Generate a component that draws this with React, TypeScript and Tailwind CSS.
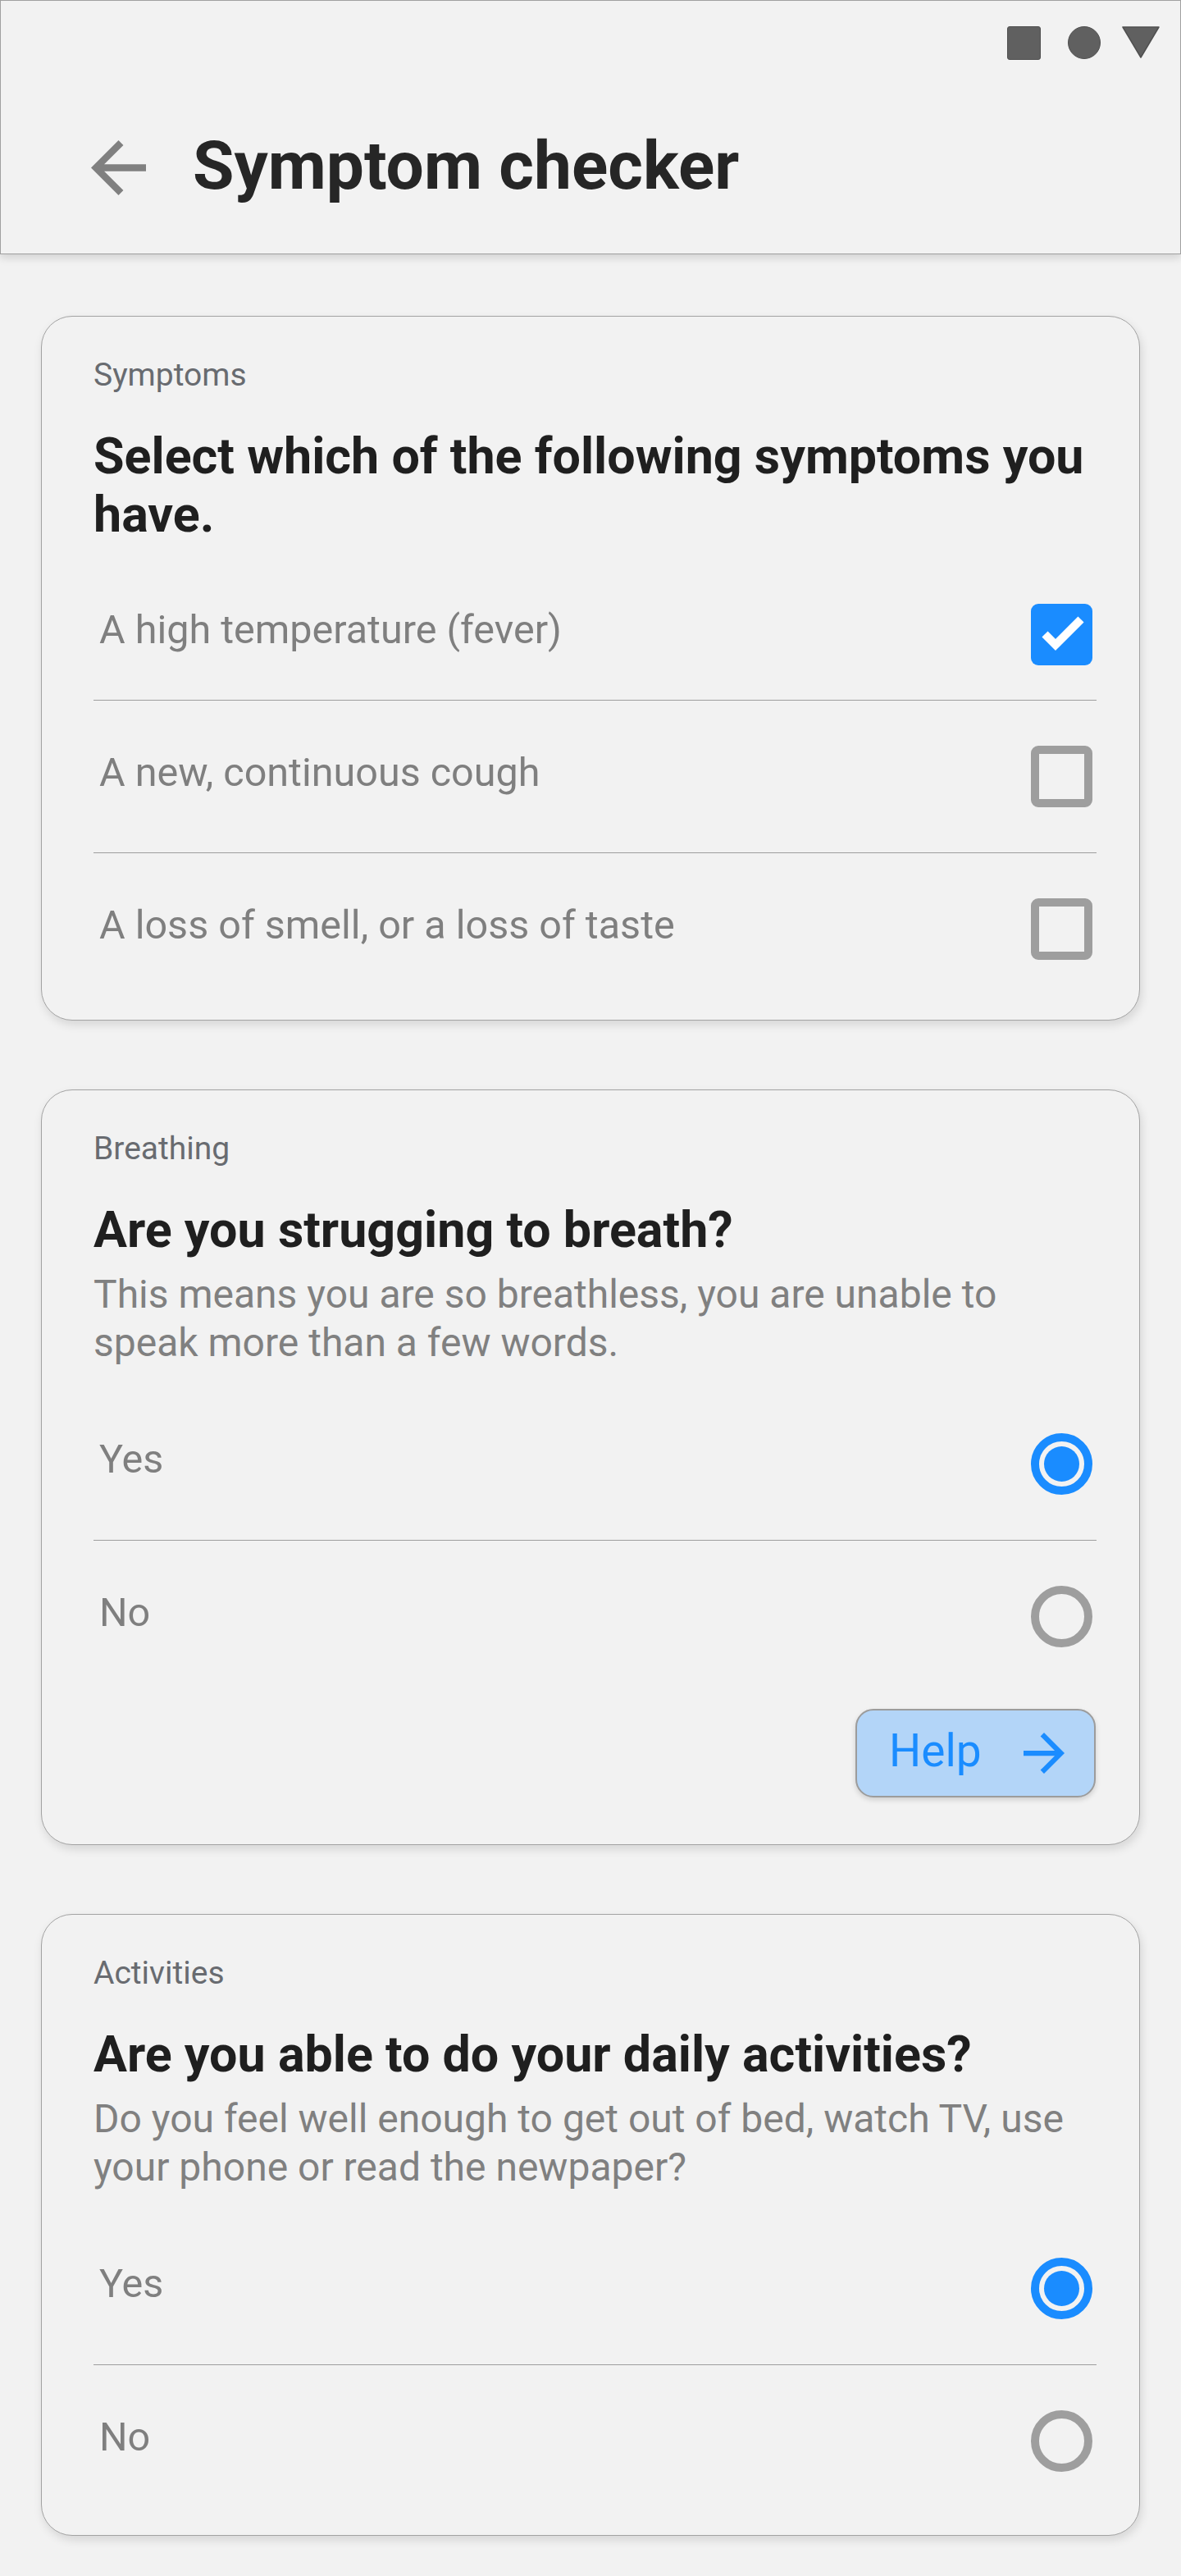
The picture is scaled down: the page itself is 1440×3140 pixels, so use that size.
import React from 'react';

const BLUE = '#1a8cff';

const StatusIcons: React.FC = () => (
  <div className="flex justify-end items-start pt-[31px] pr-[25px]">
    <div className="w-[41px] h-[41px] rounded-[3px] bg-[#606060] border border-[#505050]" />
    <div className="ml-[33px] w-[40px] h-[40px] rounded-full bg-[#606060] border border-[#505050]" />
    <svg className="ml-[26px]" width="46" height="39" viewBox="0 0 46 39">
      <polygon points="1,1 45,1 23,38" fill="#606060" stroke="#505050" strokeWidth="1.5" strokeLinejoin="round" />
    </svg>
  </div>
);

const Header: React.FC = () => (
  <header className="h-[310px] bg-[#f2f2f2] border border-[#a0a0a0] shadow-[0_4px_10px_rgba(0,0,0,0.14)] relative z-10">
    <StatusIcons />
    <div className="flex items-center mt-[84px] pl-[110px] h-[94px]">
      <svg width="67" height="67" viewBox="4 4 16 16" fill="#808080">
        <path d="M20 11H7.83l5.59-5.59L12 4l-8 8 8 8 1.41-1.41L7.83 13H20v-2z" />
      </svg>
      <h1 className="ml-[57px] text-[82px] leading-[94px] font-bold text-[#262626] pb-[4px]">Symptom checker</h1>
    </div>
  </header>
);

const Checkbox: React.FC<{ checked?: boolean }> = ({ checked }) =>
  checked ? (
    <div className="w-[75px] h-[75px] rounded-[9px] bg-[#1a8cff] flex items-center justify-center">
      <svg width="75" height="75" viewBox="0 0 75 75">
        <polyline points="17,37 30,50 61,19" fill="none" stroke="#ffffff" strokeWidth="10" />
      </svg>
    </div>
  ) : (
    <div className="w-[75px] h-[75px] rounded-[9px] border-[10px] border-[#9e9e9e]" />
  );

const Radio: React.FC<{ checked?: boolean }> = ({ checked }) =>
  checked ? (
    <div className="w-[75px] h-[75px] rounded-full border-[10px] border-[#1a8cff] flex items-center justify-center">
      <div className="w-[43px] h-[43px] rounded-full bg-[#1a8cff]" />
    </div>
  ) : (
    <div className="w-[75px] h-[75px] rounded-full border-[10px] border-[#9e9e9e]" />
  );

const OptionRow: React.FC<{ text: string; first?: boolean; short?: boolean; children: React.ReactNode }> = ({ text, first, short, children }) => (
  <div className={`flex items-center justify-between pl-[7px] pr-[5px] ${short ? 'h-[160px]' : 'h-[186px]'} ${first ? '' : 'border-t border-[#9e9e9e]'}`}>
    <span className="text-[48.5px] leading-[58px] text-[#7f7f7f] pb-[10px]">{text}</span>
    {children}
  </div>
);

const Card: React.FC<{ label: string; title: string; desc?: string; className?: string; children: React.ReactNode }> = ({ label, title, desc, className, children }) => (
  <section className={`mx-[50px] rounded-[38px] border border-[#a3a3a3] bg-[#f2f2f2] shadow-[2px_5px_12px_rgba(0,0,0,0.12)] pt-[48px] pl-[63px] pr-[52px] flex flex-col ${className ?? ''}`}>
    <p className="text-[39px] leading-[46px] text-[#686b70]">{label}</p>
    <h2 className="mt-[41px] text-[61px] leading-[71px] font-bold text-[#1f1f1f] mr-[-30px]">{title}</h2>
    {desc && <p className="mt-[13px] text-[48px] leading-[59px] text-[#808080]">{desc}</p>}
    {children}
  </section>
);

const HelpButton: React.FC = () => (
  <button className="self-end mr-[1px] mt-[20px] w-[293px] h-[108px] rounded-[22px] border-2 border-[#9c9c9c] bg-[#b3d5f8] shadow-[0_3px_6px_rgba(0,0,0,0.15)] flex items-center pl-[39px]">
    <span className="text-[55px] leading-[64px] text-[#1a8cff] pb-[6px]">Help</span>
    <svg className="ml-[51px]" width="50" height="50" viewBox="4 4 16 16" fill={BLUE}>
      <path d="M12 4l-1.41 1.41L16.17 11H4v2h12.17l-5.58 5.59L12 20l8-8z" />
    </svg>
  </button>
);

export default function App() {
  return (
    <div className="min-h-[3140px] bg-[#f2f2f2] font-['Roboto',sans-serif] pb-[48px]">
      <Header />

      <Card label="Symptoms" title="Select which of the following symptoms you have." className="mt-[75px] pb-[18px]">
        <div className="mt-[30px]">
          <OptionRow text="A high temperature (fever)" first short>
            <Checkbox checked />
          </OptionRow>
          <OptionRow text="A new, continuous cough">
            <Checkbox />
          </OptionRow>
          <OptionRow text="A loss of smell, or a loss of taste">
            <Checkbox />
          </OptionRow>
        </div>
      </Card>

      <Card
        label="Breathing"
        title="Are you strugging to breath?"
        desc="This means you are so breathless, you are unable to speak more than a few words."
        className="mt-[84px] pb-[57px]"
      >
        <div className="mt-[25px]">
          <OptionRow text="Yes" first>
            <Radio checked />
          </OptionRow>
          <OptionRow text="No">
            <Radio />
          </OptionRow>
        </div>
        <HelpButton />
      </Card>

      <Card
        label="Activities"
        title="Are you able to do your daily activities?"
        desc="Do you feel well enough to get out of bed, watch TV, use your phone or read the newpaper?"
        className="mt-[84px] pb-[22px]"
      >
        <div className="mt-[25px]">
          <OptionRow text="Yes" first>
            <Radio checked />
          </OptionRow>
          <OptionRow text="No">
            <Radio />
          </OptionRow>
        </div>
      </Card>
    </div>
  );
}
